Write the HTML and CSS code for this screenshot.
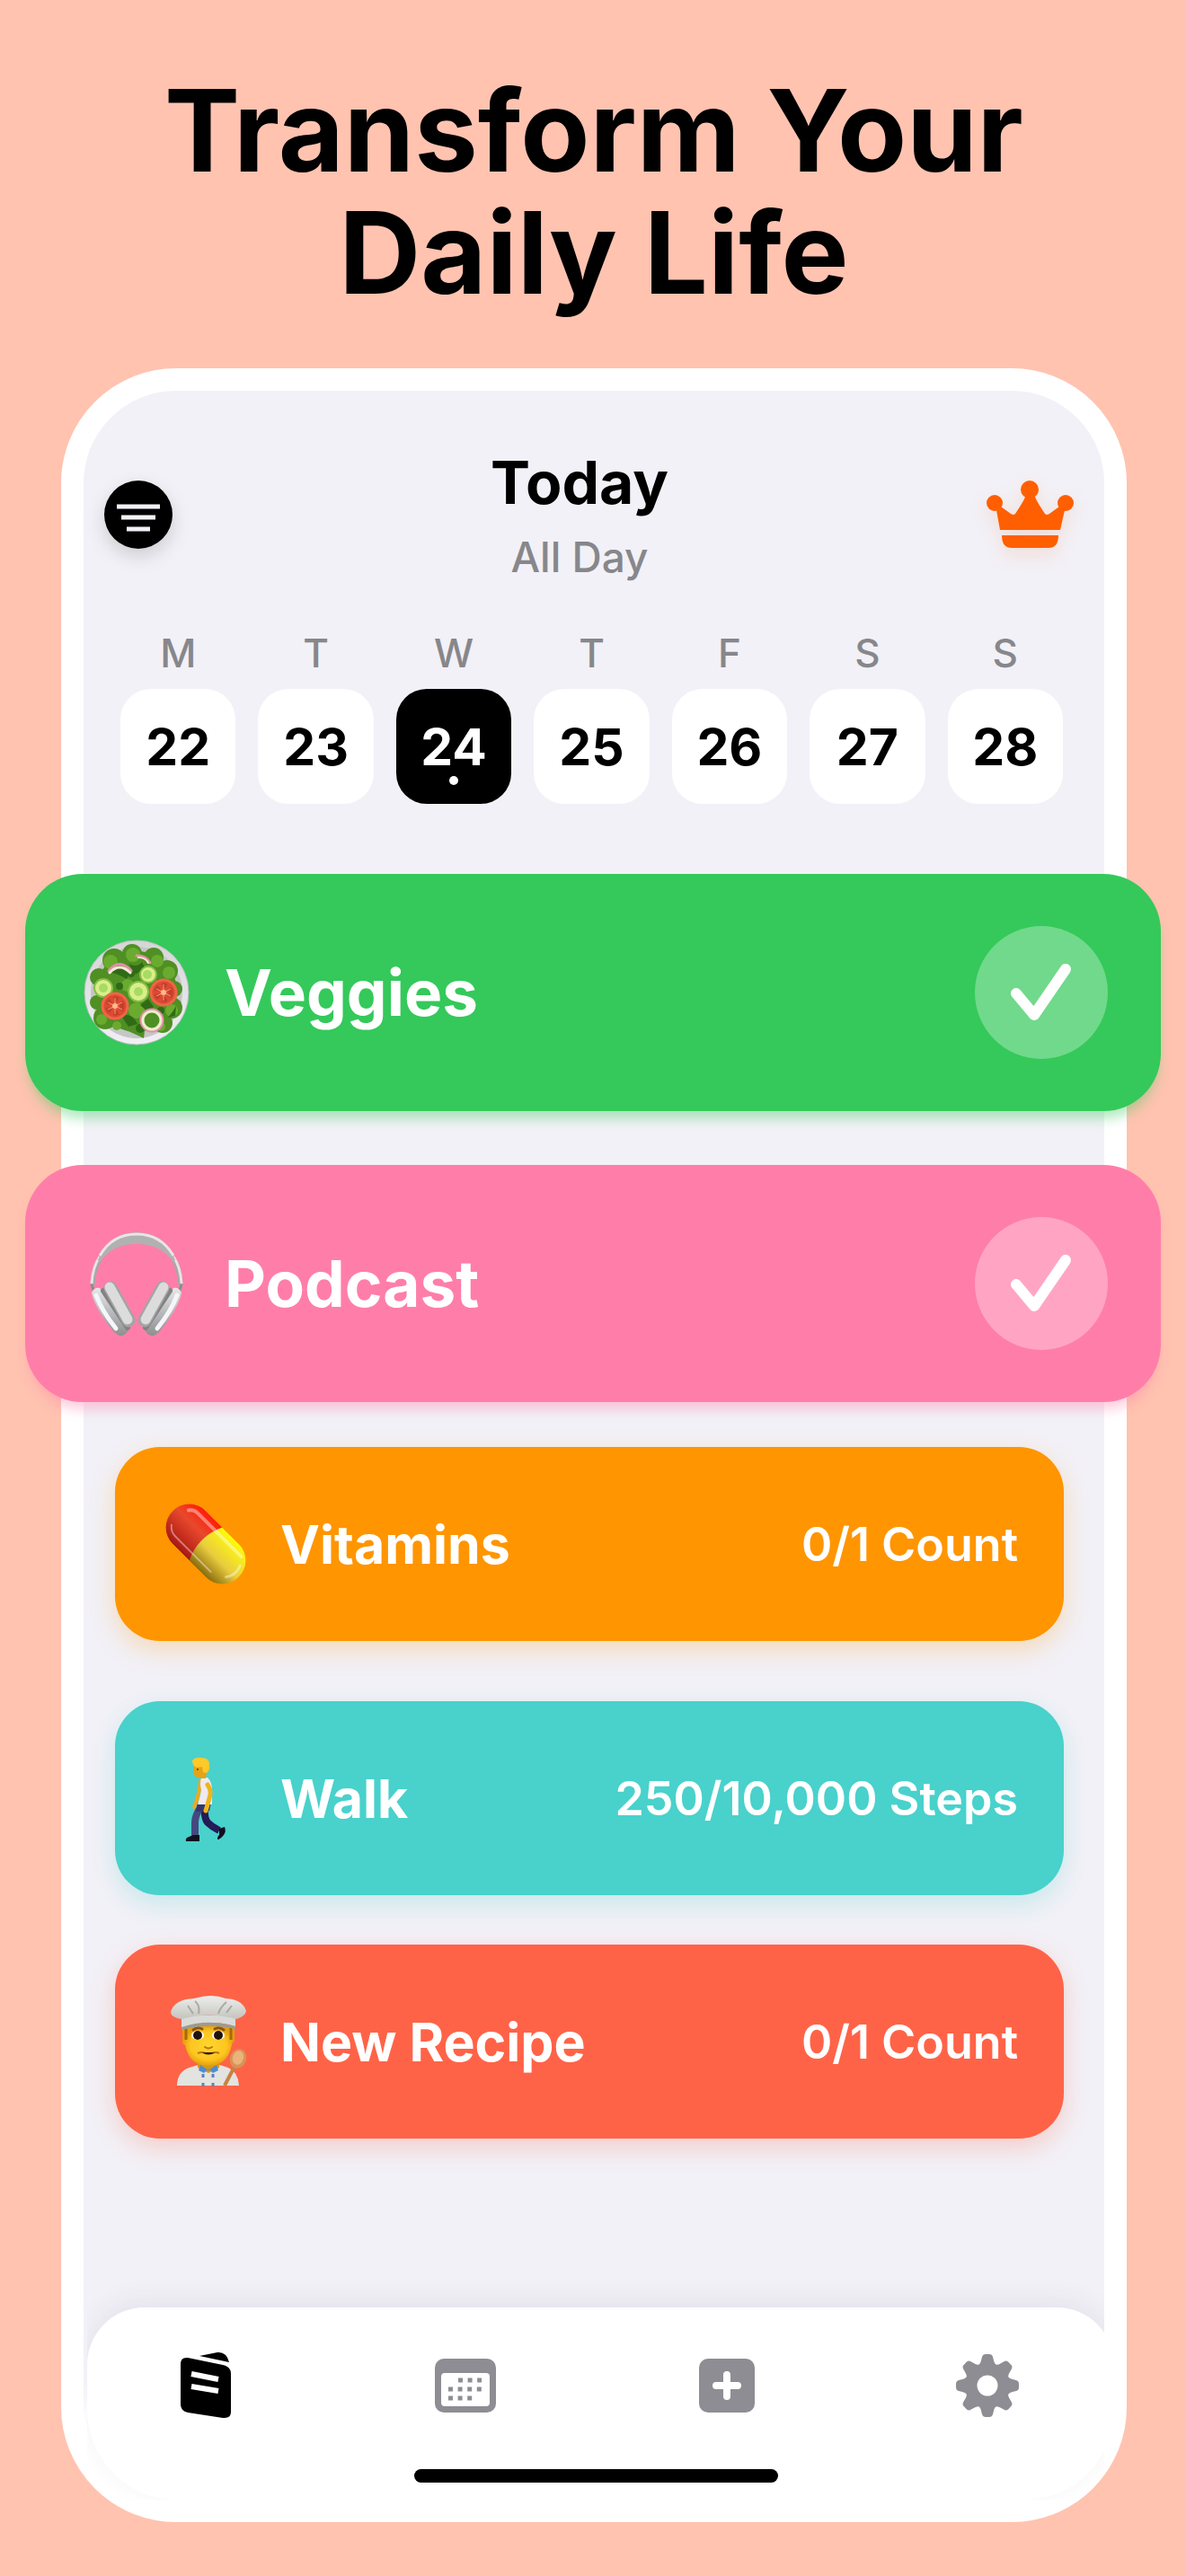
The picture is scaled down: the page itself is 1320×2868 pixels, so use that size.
FILE: index.html
```html
<!DOCTYPE html>
<html lang="en">
<head>
    <meta charset="UTF-8">
    <meta name="viewport" content="width=device-width, initial-scale=1.0">
    <title>Transform Your Daily Life</title>
    <link rel="stylesheet" href="styles.css">
</head>
<body>
    <h1 class="headline">Transform Your<br>Daily Life</h1>

    <main class="phone">
        <header class="top">
            <button class="icon-button" aria-label="Filter">
                <svg class="filter-icon" viewBox="0 0 76 76">
                    <circle cx="38" cy="38" r="38" fill="#000"/>
                    <path d="M14 29h48M19 41h38M25 54h26" stroke="#f2f1f7" stroke-width="5"/>
                </svg>
            </button>
            <div class="top-title">
                <h2>Today</h2>
                <p>All Day</p>
            </div>
            <button class="icon-button" aria-label="Premium">
                <svg class="crown-icon" viewBox="0 0 98 76" fill="#ff5f00">
                    <circle cx="48" cy="10" r="10"/>
                    <circle cx="9" cy="25" r="9"/>
                    <circle cx="88" cy="25" r="9"/>
                    <path d="M43 18h11q1 4 11 19 2 2 5 0l11-8 6 4-5 22H15l-4-22 5-4 11 8q3 2 5 0 10-15 11-19z"/>
                    <path d="M17 61h63q0 14-11 14H28q-11 0-11-14z"/>
                </svg>
            </button>
        </header>

        <nav class="week" aria-label="Week">
            <button class="day"><span class="day-name">M</span><span class="day-number">22</span></button>
            <button class="day"><span class="day-name">T</span><span class="day-number">23</span></button>
            <button class="day active" aria-current="date"><span class="day-name">W</span><span class="day-number">24</span></button>
            <button class="day"><span class="day-name">T</span><span class="day-number">25</span></button>
            <button class="day"><span class="day-name">F</span><span class="day-number">26</span></button>
            <button class="day"><span class="day-name">S</span><span class="day-number">27</span></button>
            <button class="day"><span class="day-name">S</span><span class="day-number">28</span></button>
        </nav>

        <section class="habits featured">
            <article class="habit green">
                <svg class="emoji" viewBox="0 0 118 118">
                    <defs>
                        <linearGradient id="plate" x1="0" y1="0" x2="0" y2="1">
                            <stop offset="0" stop-color="#d5d5d9"/>
                            <stop offset="1" stop-color="#f1eff5"/>
                        </linearGradient>
                    </defs>
                    <circle cx="59" cy="59" r="58" fill="url(#plate)" stroke="#b9bcba" stroke-width="1"/>
                    <circle cx="59" cy="59" r="51" fill="#c4c7c5"/>
                    <g fill="#4f8f23">
                        <circle cx="59" cy="58" r="45"/>
                        <circle cx="34" cy="23" r="13"/>
                        <circle cx="54" cy="16" r="11"/>
                        <circle cx="78" cy="20" r="11"/>
                        <circle cx="93" cy="35" r="12"/>
                        <circle cx="101" cy="55" r="9"/>
                        <circle cx="98" cy="76" r="12"/>
                        <circle cx="88" cy="93" r="11"/>
                        <circle cx="24" cy="87" r="13"/>
                        <circle cx="15" cy="70" r="8"/>
                        <circle cx="17" cy="42" r="10"/>
                        <path d="M39 98q12 4 28 12l2-18-20-10z"/>
                    </g>
                    <g fill="#69ab2f">
                        <circle cx="30" cy="25" r="8"/>
                        <circle cx="55" cy="17" r="8"/>
                        <circle cx="82" cy="24" r="7"/>
                        <circle cx="95" cy="37" r="7"/>
                        <circle cx="49" cy="51" r="7"/>
                        <circle cx="20" cy="89" r="6"/>
                        <circle cx="59" cy="79" r="9"/>
                        <circle cx="98" cy="79" r="7"/>
                        <circle cx="37" cy="96" r="5"/>
                        <circle cx="86" cy="97" r="5"/>
                    </g>
                    <g fill="#2f6b16">
                        <path d="M31 37q9-13 21-2l-4 9q-10-6-17-7zM50 27q10 5 15-2l3 6-10 8zM82 44l14 2-5 5zM42 85q12-4 18 9l-10 3zM63 73l9-7 6 9-6 6zM94 87q6-7 9-13l-1 11z"/>
                        <circle cx="40" cy="52" r="4"/>
                        <circle cx="53" cy="38" r="4"/>
                        <circle cx="63" cy="99" r="5"/>
                        <circle cx="86" cy="79" r="4"/>
                    </g>
                    <g fill="#d9ee8a" stroke="#86bd45" stroke-width="2">
                        <circle cx="22" cy="54" r="10"/>
                        <circle cx="61" cy="58" r="11"/>
                        <circle cx="72" cy="39" r="9"/>
                    </g>
                    <g fill="#a8db63">
                        <circle cx="22" cy="54" r="5"/>
                        <circle cx="61" cy="58" r="5"/>
                        <circle cx="71" cy="39" r="5"/>
                    </g>
                    <g fill="#dc4a32" stroke="#ee6547" stroke-width="3">
                        <circle cx="35" cy="74" r="14"/>
                        <circle cx="89" cy="59" r="14"/>
                    </g>
                    <g fill="none" stroke="#c23f2c" stroke-width="5" stroke-dasharray="5 4">
                        <circle cx="35" cy="74" r="8"/>
                        <circle cx="89" cy="59" r="8"/>
                    </g>
                    <g stroke="#f59a74" stroke-width="1">
                        <path d="M35 65v18M27 70l16 8M27 78l16-8M89 50v18M81 55l16 8M81 63l16-8"/>
                    </g>
                    <g fill="#ffb98d">
                        <circle cx="35" cy="74" r="3"/>
                        <circle cx="89" cy="59" r="3"/>
                    </g>
                    <g fill="none" stroke-linecap="round">
                        <circle cx="76" cy="90" r="12" stroke="#e78caa" stroke-width="3"/>
                        <circle cx="76" cy="90" r="10" stroke="#e9f0c9" stroke-width="3"/>
                        <path d="M28 35q12-15 25 0" stroke="#e78caa" stroke-width="3"/>
                        <path d="M29 37q11-12 23 0" stroke="#f4ead9" stroke-width="3"/>
                        <path d="M59 18q11 0 15 8" stroke="#e78caa" stroke-width="3"/>
                        <path d="M61 20q8 0 11 6" stroke="#f4ead9" stroke-width="2"/>
                    </g>
                </svg>
                <h3>Veggies</h3>
                <label class="check">
                    <input type="checkbox" aria-label="Veggies done" checked>
                    <svg viewBox="0 0 148 148"><path d="M46 75l20 24 35-51"/></svg>
                </label>
            </article>

            <article class="habit pink">
                <svg class="emoji" viewBox="0 0 118 118">
                    <defs>
                        <linearGradient id="cup" x1="0" y1="0" x2="0" y2="1">
                            <stop offset="0" stop-color="#e6e7ea"/>
                            <stop offset="1" stop-color="#8f8f90"/>
                        </linearGradient>
                        <g id="earcup">
                            <path d="M9 60l4 12" stroke="#8c8c8c" stroke-width="3"/>
                            <path d="M9 69q3-6 9-5l32 46q-1 5-7 7-4 1-9-4-21-25-25-44z" fill="url(#cup)"/>
                            <path d="M14 72q6 17 22 37" fill="none" stroke="#f4f7fa" stroke-width="5" stroke-linecap="round"/>
                            <path d="M22 67l27 41" stroke="#828283" stroke-width="6" stroke-linecap="round"/>
                            <path d="M30 64l20 36" stroke="#a4a4a4" stroke-width="15" stroke-linecap="round"/>
                            <path d="M29 63l20 36" stroke="#dcdcdc" stroke-width="11" stroke-linecap="round"/>
                        </g>
                    </defs>
                    <path d="M10 61q1-18 9-31M108 61q-1-18-9-31" fill="none" stroke="#a8a8a8" stroke-width="5"/>
                    <path d="M9 59q1-18 9-30M109 59q-1-18-9-30" fill="none" stroke="#e5e5e5" stroke-width="3"/>
                    <path d="M16 33Q29 2 59 2t43 31l-2 2Q86 15 59 15T18 35z" fill="#b1b1b1"/>
                    <path d="M18 28Q32 4 59 4t41 24" fill="none" stroke="#e6e6e6" stroke-width="3"/>
                    <use href="#earcup"/>
                    <use href="#earcup" transform="translate(118 0) scale(-1 1)"/>
                </svg>
                <h3>Podcast</h3>
                <label class="check">
                    <input type="checkbox" aria-label="Podcast done" checked>
                    <svg viewBox="0 0 148 148"><path d="M46 75l20 24 35-51"/></svg>
                </label>
            </article>
        </section>

        <section class="habits due">
            <article class="habit orange">
                <svg class="emoji" viewBox="0 0 96 96">
                    <defs>
                        <linearGradient id="pill-red" x1="0" y1="0" x2="0" y2="1">
                            <stop offset="0" stop-color="#ff1d0a"/>
                            <stop offset="0.4" stop-color="#e8492d"/>
                            <stop offset="1" stop-color="#a91811"/>
                        </linearGradient>
                        <linearGradient id="pill-yellow" x1="0" y1="0" x2="0" y2="1">
                            <stop offset="0" stop-color="#fffb0a"/>
                            <stop offset="0.55" stop-color="#e9cd3f"/>
                            <stop offset="1" stop-color="#8a6c0c"/>
                        </linearGradient>
                        <clipPath id="capsule">
                            <rect x="-52" y="-26" width="104" height="52" rx="26" transform="translate(47 48) rotate(45)"/>
                        </clipPath>
                    </defs>
                    <g clip-path="url(#capsule)">
                        <g transform="translate(47 48) rotate(45)">
                            <rect x="-52" y="-26" width="60" height="52" fill="url(#pill-red)"/>
                            <path d="M0-26h52v52H0Q-12 0 0-26z" fill="url(#pill-yellow)"/>
                            <path d="M-40-13q3-5 10-5h68" fill="none" stroke="#fff" stroke-opacity="0.4" stroke-width="4" stroke-linecap="round"/>
                            <path d="M-42 12q5 6 12 6h56" fill="none" stroke="#fff" stroke-opacity="0.4" stroke-width="2" stroke-linecap="round"/>
                            <path d="M44-10q5 10-2 20" fill="none" stroke="#fff" stroke-opacity="0.4" stroke-width="3" stroke-linecap="round"/>
                        </g>
                    </g>
                </svg>
                <h3>Vitamins</h3>
                <p class="progress">0/1 Count</p>
            </article>
        </section>

        <section class="habits tracked">
            <article class="habit teal">
                <svg class="emoji" viewBox="0 0 96 96">
                    <path d="M41 29q-1 14-7 29" fill="none" stroke="#f0a81c" stroke-width="4" stroke-linecap="round"/>
                    <path d="M46 58q-1 12 3 17 5 5 13 9" fill="none" stroke="#241b57" stroke-width="8"/>
                    <path d="M42 57q-7 10-7 18v16" fill="none" stroke="#46497f" stroke-width="8"/>
                    <path d="M38 53h15l-2 9-15 1z" fill="#34366d"/>
                    <path d="M42 25h7q5 5 5 14v16H38q3-9 4-16-2-8 0-14z" fill="#eeeaf0"/>
                    <path d="M49 33q5 7 2 15l-4 14" fill="none" stroke="#efb41c" stroke-width="5" stroke-linecap="round"/>
                    <path d="M26 92l7-3h7v7H25q-1-2 1-4zM62 82l6-2q2 5-1 9-4 5-7 5 0-4 2-5z" fill="#120f1e"/>
                    <path d="M33 12h16l-2 14h-5q-8-1-9-7z" fill="#e6a315"/>
                    <path d="M32 6q4-4 10-3 9 0 9 7 1 7-3 10l-4-1-1-6q-6 1-8 0-3-2-3-7z" fill="#ffc928"/>
                    <circle cx="38" cy="16" r="1" fill="#5d3507"/>
                </svg>
                <h3>Walk</h3>
                <p class="progress">250/10,000 Steps</p>
            </article>
            <article class="habit red">
                <svg class="emoji" viewBox="0 0 96 96">
                    <defs>
                        <linearGradient id="hat" x1="0" y1="0" x2="0" y2="1">
                            <stop offset="0" stop-color="#eeeeec"/>
                            <stop offset="1" stop-color="#c4c4be"/>
                        </linearGradient>
                        <radialGradient id="face">
                            <stop offset="0" stop-color="#ffd62f"/>
                            <stop offset="0.7" stop-color="#fdc51f"/>
                            <stop offset="1" stop-color="#e59d0e"/>
                        </radialGradient>
                    </defs>
                    <path d="M15 97q0-17 17-21l10-3h17l10 3q14 4 15 21z" fill="#e3e3df"/>
                    <path d="M38 66h24v11L50 83 38 77z" fill="#d79813"/>
                    <path d="M41 74l-2 6 6 3 5-5 5 5 6-3-2-6-9 6z" fill="#4f8bd1"/>
                    <path d="M44 84v14M55 84v14" stroke="#5c83bd" stroke-width="3" stroke-dasharray="4 6"/>
                    <path d="M21 30h58v18q-2 0-3 4-5 23-26 23T24 52q-3-1-3-5z" fill="url(#face)"/>
                    <path d="M25 32v14M75 32v14" stroke="#a76a09" stroke-width="3"/>
                    <path d="M33 35q5-4 10-1M57 34q5-3 10 1" fill="none" stroke="#8c5711" stroke-width="3" stroke-linecap="round"/>
                    <ellipse cx="38" cy="41" rx="7" ry="5" fill="#fff"/>
                    <ellipse cx="61" cy="41" rx="7" ry="5" fill="#fff"/>
                    <circle cx="38" cy="41" r="5" fill="#21120b"/>
                    <circle cx="61" cy="41" r="5" fill="#21120b"/>
                    <path d="M46 54q4 3 8 0" fill="none" stroke="#b77508" stroke-width="2" stroke-linecap="round"/>
                    <path d="M38 61q5-2 8 0h8q4-2 8 0" fill="none" stroke="#b97a10" stroke-width="2"/>
                    <path d="M43 60h14q-7 5-14 0z" fill="#3e1c07"/>
                    <path d="M20 18l60 1v12q-29-9-60 2z" fill="#dadad7"/>
                    <path d="M20 32q29-10 60-1v3q-30-7-60 1z" fill="#9c9b92"/>
                    <path d="M8 15Q12 1 34 0q20-6 35 0 19 1 23 14-1 6-11 9-30-9-61 0-12-2-12-8z" fill="url(#hat)"/>
                    <path d="M35 3q6 5 4 14M70 4q-7 6-9 13M27 8l6 9M76 8l-6 8" fill="none" stroke="#aaa9a3" stroke-width="2"/>
                    <path d="M82 70L68 97" stroke="#c78344" stroke-width="4"/>
                    <ellipse cx="83" cy="67" rx="9" ry="11" fill="#d79356" transform="rotate(18 83 67)"/>
                    <ellipse cx="83" cy="66" rx="6" ry="8" fill="#ebb27b" transform="rotate(18 83 66)"/>
                </svg>
                <h3>New Recipe</h3>
                <p class="progress">0/1 Count</p>
            </article>
        </section>

        <footer class="dock">
            <nav class="tabs" aria-label="Main">
                <a class="tab active" href="#today" aria-label="Today">
                    <svg viewBox="0 0 72 72" fill="currentColor">
                        <path d="M30 3l20-4q10-1 13 11z"/>
                        <path d="M17 5l39 8q9 2 9 10v42q0 8-9 7l-39-6q-8-2-8-9V12q0-8 8-7z"/>
                        <path d="M21 23l30 6M21 37l30 5" stroke="#fff" stroke-width="6"/>
                    </svg>
                </a>
                <a class="tab" href="#calendar" aria-label="Calendar">
                    <svg viewBox="0 0 72 72" fill="currentColor">
                        <rect x="2" y="6" width="68" height="60" rx="10"/>
                        <rect x="9" y="22" width="54" height="37" rx="4" fill="#fff"/>
                        <path d="M28 30h26M17 40h37M17 50h27" fill="none" stroke="currentColor" stroke-width="5" stroke-dasharray="5 5.6"/>
                    </svg>
                </a>
                <a class="tab" href="#add" aria-label="Add">
                    <svg viewBox="0 0 72 72" fill="currentColor">
                        <rect x="5" y="6" width="62" height="60" rx="10"/>
                        <path d="M36 24v24M24 36h24" stroke="#fff" stroke-width="8" stroke-linecap="round"/>
                    </svg>
                </a>
                <a class="tab" href="#settings" aria-label="Settings">
                    <svg viewBox="0 0 72 72" fill="currentColor">
                        <defs>
                            <path id="tooth" d="M24 14q4-1 5-6l1-4q1-3 4-3h4q3 0 4 3l1 4q1 5 5 6z"/>
                        </defs>
                        <circle cx="36" cy="36" r="18" fill="none" stroke="currentColor" stroke-width="13"/>
                        <use href="#tooth"/>
                        <use href="#tooth" transform="rotate(45 36 36)"/>
                        <use href="#tooth" transform="rotate(90 36 36)"/>
                        <use href="#tooth" transform="rotate(135 36 36)"/>
                        <use href="#tooth" transform="rotate(180 36 36)"/>
                        <use href="#tooth" transform="rotate(225 36 36)"/>
                        <use href="#tooth" transform="rotate(270 36 36)"/>
                        <use href="#tooth" transform="rotate(315 36 36)"/>
                    </svg>
                </a>
            </nav>
            <div class="home-bar"></div>
        </footer>
    </main>
</body>
</html>
```
FILE: styles.css
```css
* {
    box-sizing: border-box;
}

body {
    margin: 0;
    padding: 77px 66px 60px 68px;
    background: #ffc3b0;
    color: #000;
    font-family: Inter, "Liberation Sans", sans-serif;
}

h1, h2, h3, p {
    margin: 0;
}

button {
    padding: 0;
    border: none;
    background: none;
    color: inherit;
    font: inherit;
    cursor: pointer;
}

svg {
    display: block;
    overflow: visible;
}

.headline {
    text-align: center;
    font-size: 126px;
    line-height: 136px;
    font-weight: 700;
}

.phone {
    margin-top: 61px;
    border: 25px solid #fff;
    border-radius: 128px;
    background: linear-gradient(#f2f1f7 calc(100% - 130px), #fff calc(100% - 80px));
}

/* Header */
.top {
    display: grid;
    grid-template-columns: auto 1fr auto;
    align-items: center;
    padding: 62px 33px 0 23px;
}

.top-title {
    display: grid;
    gap: 15px;
    text-align: center;
}

.top-title h2 {
    font-size: 66px;
    line-height: 80px;
    font-weight: 700;
}

.top-title p {
    color: #87878b;
    font-size: 46px;
    line-height: 56px;
    font-weight: 500;
}

.filter-icon {
    width: 76px;
    filter: drop-shadow(0 8px 10px rgba(0, 0, 0, 0.15));
}

.crown-icon {
    width: 98px;
    filter: drop-shadow(0 8px 10px rgba(255, 95, 0, 0.15));
}

/* Week strip */
.week {
    display: grid;
    grid-template-columns: repeat(7, 1fr);
    gap: 25px;
    margin-top: 51px;
    padding: 0 46px 0 41px;
}

.day {
    display: grid;
    gap: 12px;
}

.day-name {
    color: #87878b;
    font-size: 44px;
    line-height: 56px;
    font-weight: 500;
}

.day-number {
    position: relative;
    display: flex;
    align-items: center;
    justify-content: center;
    height: 128px;
    border-radius: 34px;
    background: #fff;
    font-size: 57px;
    font-weight: 700;
}

.day.active .day-number {
    background: #000;
    color: #fff;
}

.day.active .day-number::after {
    content: "";
    position: absolute;
    left: 50%;
    bottom: 21px;
    width: 10px;
    height: 10px;
    margin-left: -5px;
    border-radius: 50%;
    background: #fff;
}

/* Habit cards */
.habits {
    display: flex;
    flex-direction: column;
    gap: 55px;
    padding: 0 45px 0 35px;
}

.habit {
    display: flex;
    align-items: center;
    gap: 34px;
    min-height: 216px;
    padding: 0 51px 0 54px;
    border-radius: 50px;
    color: #fff;
}

.habit h3 {
    flex: 1;
    font-size: 59px;
    font-weight: 700;
}

.emoji {
    width: 96px;
}

.progress {
    font-size: 52px;
    font-weight: 600;
}

.featured {
    gap: 60px;
    margin: 78px -63px 0 -65px;
    padding: 0;
}

.featured .habit {
    gap: 39px;
    min-height: 264px;
    padding: 0 59px 0 65px;
    border-radius: 64px;
}

.featured .habit h3 {
    font-size: 71px;
}

.featured .emoji {
    width: 118px;
}

.due {
    margin-top: 50px;
}

.tracked {
    margin-top: 67px;
}

.green {
    background: #34c95a;
    box-shadow: 0 12px 14px -4px rgba(52, 201, 90, 0.4);
}

.pink {
    background: #ff7ea9;
    box-shadow: 0 12px 14px -4px rgba(255, 126, 169, 0.4);
}

.orange {
    background: #ff9500;
    box-shadow: 0 10px 28px rgba(255, 149, 0, 0.26);
}

.teal {
    background: #49d1cc;
    box-shadow: 0 10px 28px rgba(73, 209, 204, 0.26);
}

.red {
    background: #ff6347;
    box-shadow: 0 10px 28px rgba(255, 99, 71, 0.26);
}

.check {
    display: grid;
    cursor: pointer;
}

.check input,
.check svg {
    grid-area: 1 / 1;
    width: 148px;
    height: 148px;
    margin: 0;
}

.check input {
    appearance: none;
    border-radius: 50%;
    background: rgba(255, 255, 255, 0.3);
}

.check svg {
    fill: none;
    stroke: #fff;
    stroke-width: 12;
    stroke-linecap: round;
    stroke-linejoin: round;
    visibility: hidden;
    pointer-events: none;
}

.check input:checked + svg {
    visibility: visible;
}

/* Bottom bar */
.dock {
    margin: 188px -11px 0 4px;
    padding: 51px 105px 19px 95px;
    border-radius: 64px 64px 100px 100px;
    background: #fff;
    box-shadow: 0 -8px 30px rgba(60, 50, 100, 0.07);
    clip-path: inset(-50px 11px 0 0);
}

.tabs {
    display: flex;
    justify-content: space-between;
}

.tab {
    width: 72px;
    color: #8e8d93;
}

.tab.active {
    color: #000;
}

.home-bar {
    width: 43%;
    height: 15px;
    margin: 57px auto 0;
    border-radius: 8px;
    background: #000;
}
```
